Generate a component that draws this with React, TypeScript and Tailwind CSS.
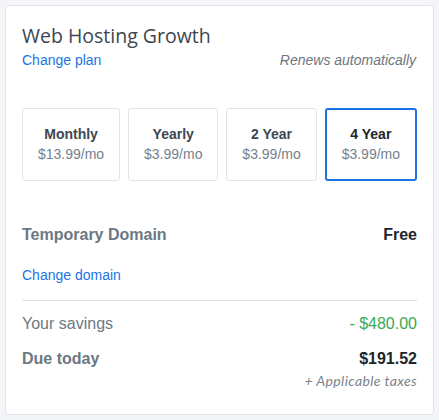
const PLANS = [
  { name: "Monthly", price: "$13.99/mo" },
  { name: "Yearly", price: "$3.99/mo" },
  { name: "2 Year", price: "$3.99/mo" },
  { name: "4 Year", price: "$3.99/mo" },
];

export default function App() {
  const selected = "4 Year";

  return (
    <div className="min-h-[420px] bg-[#f4f5f9] p-[5px] font-['Liberation_Sans',Arial,sans-serif]">
      <div className="h-[410px] rounded-[3px] border border-[#e1e4ea] bg-white px-4 pt-4">
        <h1 className="font-['Open_Sans',sans-serif] text-[19.5px] leading-[28px] text-[#3c4650]">
          Web Hosting Growth
        </h1>
        <div className="flex items-center justify-between text-[14px] leading-5">
          <a className="text-[#1b74e4]">Change plan</a>
          <span className="mr-px italic text-[#6e7780]">Renews automatically</span>
        </div>

        <div className="mt-[38px] flex gap-2">
          {PLANS.map((p) => {
            const on = p.name === selected;
            return (
              <div
                key={p.name}
                className={
                  on
                    ? "flex flex-auto flex-col items-center rounded-[3px] border-2 border-[#1b74e4] py-[14px] text-center"
                    : "flex flex-auto flex-col items-center rounded-[3px] border border-[#e1e4ea] py-[15px] text-center"
                }
              >
                <span
                  className={
                    on
                      ? "text-[14px] font-bold leading-5 text-[#1d252d]"
                      : "text-[14px] font-bold leading-5 text-[#3d4852]"
                  }
                >
                  {p.name}
                </span>
                <span className="text-[14px] leading-[21px] text-[#75808b]">{p.price}</span>
              </div>
            );
          })}
        </div>

        <div className="mt-[42px] flex items-center justify-between text-[16px] font-bold leading-6">
          <span className="text-[#6b7884]">Temporary Domain</span>
          <span className="text-[#1d252d]">Free</span>
        </div>
        <a className="mt-[18px] block text-[14px] leading-5 text-[#1b74e4]">Change domain</a>

        <div className="mt-[15px] border-t border-[#dfe3e8]" />

        <div className="mt-[11px] flex items-center justify-between text-[16px] leading-6">
          <span className="text-[#6e7882]">Your savings</span>
          <span className="text-[#3aa757]">- $480.00</span>
        </div>
        <div className="mt-[11px] flex items-center justify-between text-[16px] font-bold leading-6">
          <span className="text-[#6b7884]">Due today</span>
          <span className="text-[#1d252d]">$191.52</span>
        </div>
        <div className="mt-px text-right font-['Lato',sans-serif] text-[14px] italic leading-[18px] tracking-[0.4px] text-[#7a838c]">
          + Applicable taxes
        </div>
      </div>
    </div>
  );
}
